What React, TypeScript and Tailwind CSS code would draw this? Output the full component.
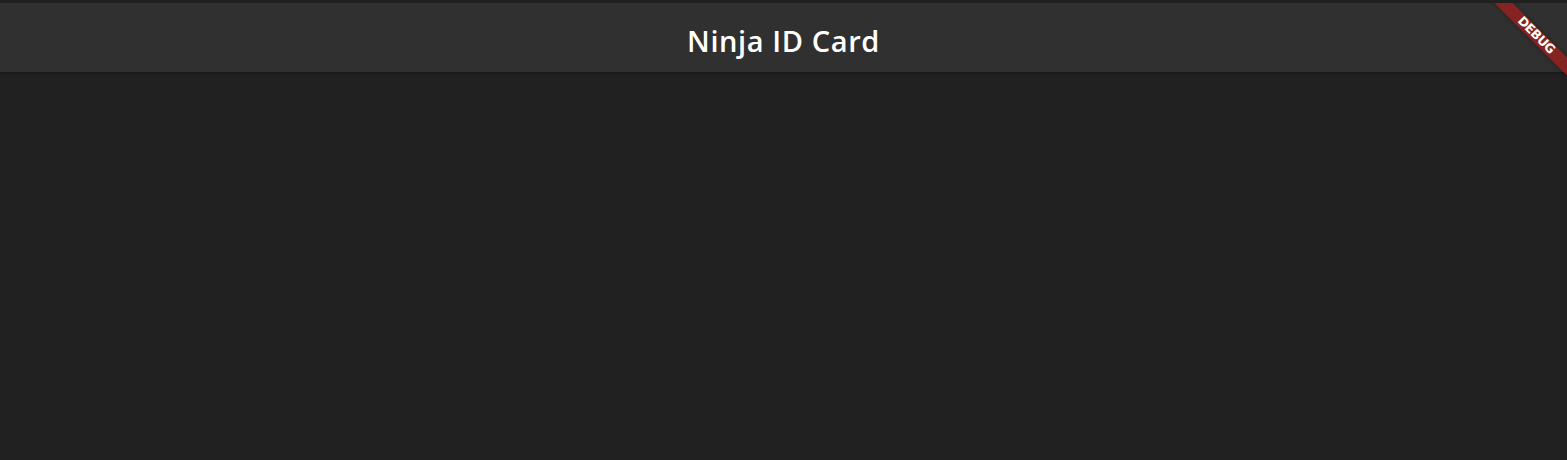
export default function App() {
  return (
    <div className="relative h-[460px] w-full overflow-hidden bg-[#212121] pt-[3px] font-['Open_Sans','Noto_Sans',sans-serif]">
      <header className="flex h-[69px] items-center justify-center bg-[#303030] pt-[5px] shadow-[0_1px_3px_rgba(0,0,0,0.35)]">
        <h1 className="text-[29px] font-semibold leading-none tracking-[0.6px] text-white">Ninja ID Card</h1>
      </header>

      {/* debug banner */}
      <div className="pointer-events-none absolute inset-x-0 top-[3px] h-[120px] overflow-hidden">
        <div className="absolute left-[1466px] top-[25.5px] flex h-[13px] w-[140px] rotate-45 items-center justify-center bg-[rgba(183,28,28,0.63)] shadow-[0_0_4px_rgba(0,0,0,0.4)]">
          <span className="font-['DejaVu_Sans',sans-serif] text-[12.5px] font-black leading-none tracking-[-0.4px] text-white">DEBUG</span>
        </div>
      </div>
    </div>
  );
}
